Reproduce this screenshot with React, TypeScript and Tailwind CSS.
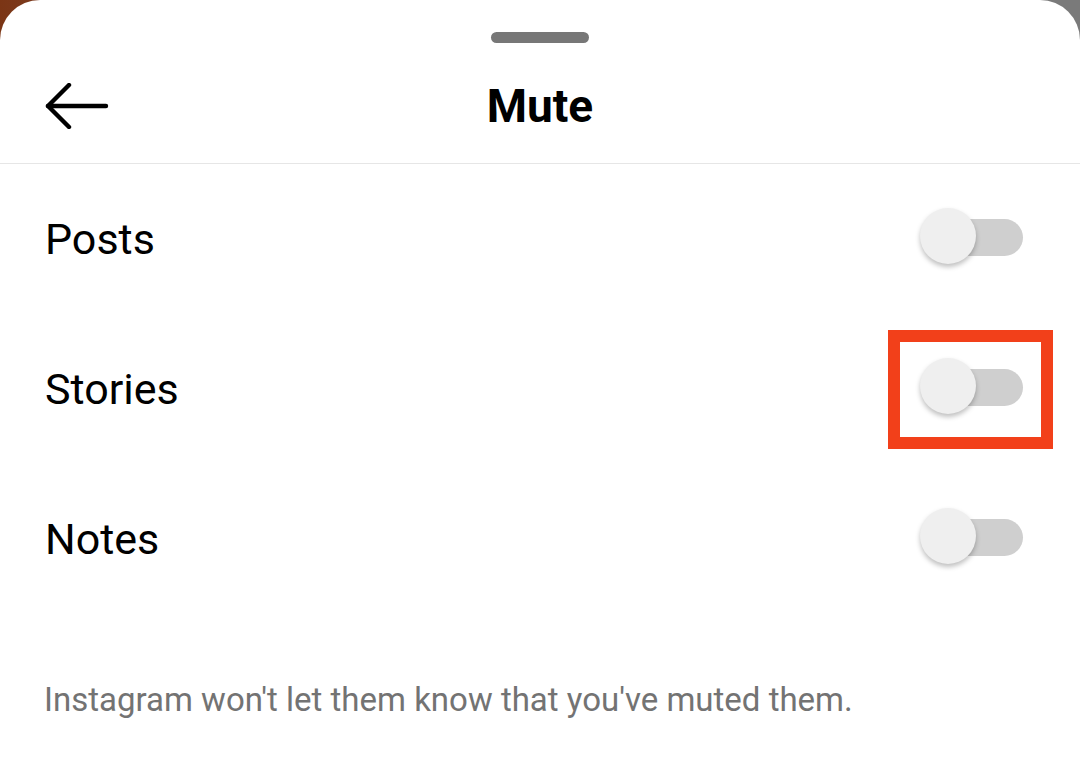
import React from 'react';

const Toggle: React.FC<{ highlighted?: boolean }> = ({ highlighted }) => {
    return (
        <div className="relative w-[103px] h-[56px] -translate-y-[3px]">
            <div className="absolute right-0 top-[11px] w-[88px] h-[37px] rounded-full bg-[#cfcfcf]" />
            <div className="absolute left-0 top-0 w-[56px] h-[56px] rounded-full bg-[#efefef] shadow-[0_3px_5px_rgba(0,0,0,0.25)]" />
            {highlighted && (
                <div className="absolute -left-[32px] -top-[28px] w-[165px] h-[119px] border-[12px] border-[#f2401a]" />
            )}
        </div>
    );
};

const rows = [
    { label: 'Posts' },
    { label: 'Stories', highlighted: true },
    { label: 'Notes' },
];

const App: React.FC = () => {
    return (
        <div className="w-[1080px] h-[781px] bg-gradient-to-r from-[#7b3515] via-[#7a7a7a] to-[#7a7a7a] overflow-hidden" style={{ fontFamily: 'Roboto, "Noto Sans", sans-serif' }}>
            <div className="h-full bg-white rounded-t-[40px] flex flex-col">
                <div className="pt-[32px] flex justify-center">
                    <div className="w-[98px] h-[11px] rounded-full bg-[#777777]" />
                </div>

                <div className="h-[121px] pt-[5px] grid grid-cols-[1fr_auto_1fr] items-center border-b border-[#e6e6e6]">
                    <div className="pl-[45px]">
                        <svg width="64" height="46" viewBox="0 0 64 46" fill="none" stroke="#000" strokeWidth="4.4" strokeLinecap="round" strokeLinejoin="round">
                            <path d="M3 23 H61" />
                            <path d="M24 2 L3 23 L24 44" />
                        </svg>
                    </div>
                    <h1 className="text-[46px] leading-none font-bold text-black">Mute</h1>
                    <div />
                </div>

                <div className="flex flex-col">
                    {rows.map((row) => (
                        <div key={row.label} className="h-[150px] flex items-center justify-between pl-[45px] pr-[57px]">
                            <span className="text-[43px] leading-none text-black">{row.label}</span>
                            <Toggle highlighted={row.highlighted} />
                        </div>
                    ))}
                </div>

                <p className="mt-[66px] pl-[44px] text-[33px] leading-[40px] text-[#737373]">
                    Instagram won't let them know that you've muted them.
                </p>
            </div>
        </div>
    );
};

export default App;
